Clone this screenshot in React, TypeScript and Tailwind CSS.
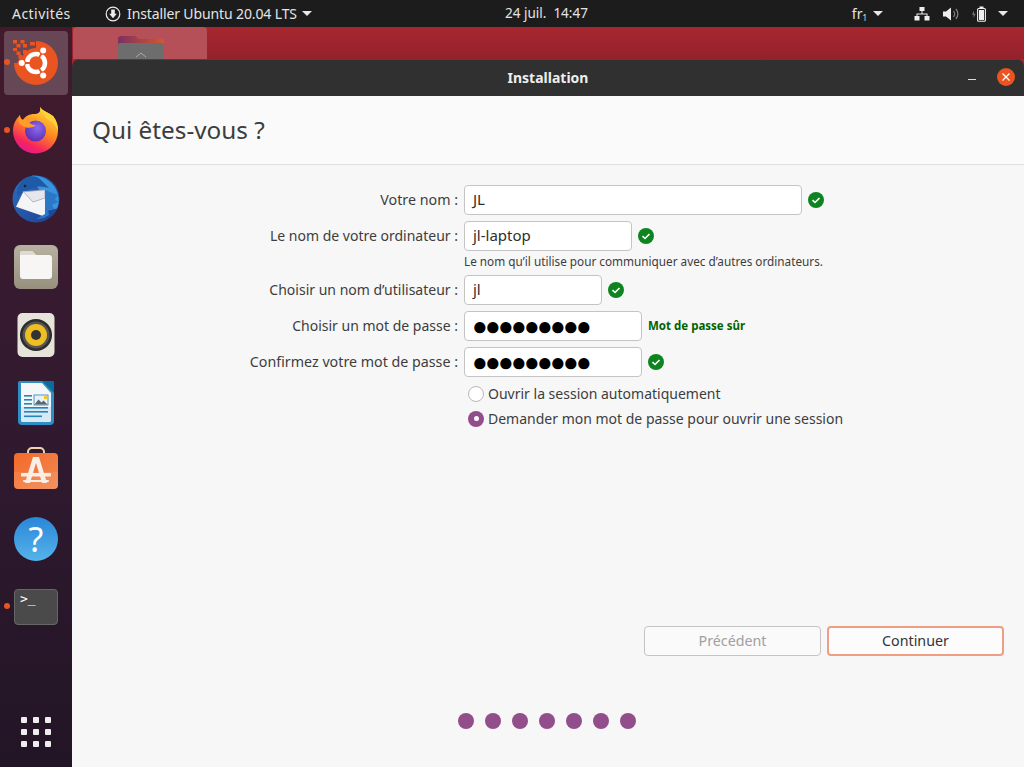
const UI_FONT = "font-['Noto_Sans','Open_Sans',sans-serif]";

function Caret({ className = "" }: { className?: string }) {
  return <div className={`h-0 w-0 border-x-[5px] border-t-[5px] border-x-transparent border-t-[#e8e8e8] ${className}`} />;
}

function TopBar() {
  return (
    <div className="flex h-[27px] items-center bg-[#1c1c1c] text-[14px] text-[#e4e4e4]">
      <span className="ml-3 w-[93px] tracking-[0.45px]">Activités</span>
      <svg width="16" height="16" viewBox="0 0 16 16" className="mr-[6px]">
        <circle cx="8" cy="8" r="6.8" fill="none" stroke="#eee" strokeWidth="1.2" />
        <path d="M6.2 3.5h3.6v4.2h2L8 12.2 4.2 7.7h2z" fill="#eee" />
      </svg>
      <span className="tracking-[-0.12px]">Installer Ubuntu 20.04 LTS</span>
      <Caret className="ml-[5px]" />
      <div className="absolute left-[505px] top-0 flex h-[27px] items-center text-[13.5px]">24 juil.&nbsp;&nbsp;14:47</div>
      <div className="ml-auto flex items-center">
        <span className="text-[14px]">fr<sub className="text-[8px]">1</sub></span>
        <Caret className="ml-[6px] mr-[31px]" />
        <svg width="16" height="14" viewBox="0 0 16 14" className="mr-[13px]" fill="#eee">
          <rect x="5.5" y="0" width="5" height="4" />
          <rect x="0.5" y="9" width="5" height="4.5" />
          <rect x="10.5" y="9" width="5" height="4.5" />
          <path d="M7.5 4h1v2.5h5V9h-1V7.5h-9V9h-1V6.5h5z" />
        </svg>
        <svg width="16" height="14" viewBox="0 0 16 14" className="mr-[12px]">
          <path d="M0 4.5h3L8 .5v13l-5-4H0z" fill="#eee" />
          <path d="M10.5 4.2a4 4 0 0 1 0 5.6M12.8 2a7.2 7.2 0 0 1 0 10" fill="none" stroke="#888" strokeWidth="1.2" />
        </svg>
        <svg width="16" height="16" viewBox="0 0 16 16" className="mr-[11px]">
          <path d="M3 4.5v3.2h1.6L2.6 12V8.8H1z" fill="#777" />
          <rect x="6.6" y="2.5" width="7.8" height="12.8" rx="1" fill="none" stroke="#eee" strokeWidth="1.1" />
          <rect x="8.5" y="0.5" width="4" height="2" fill="#eee" />
          <rect x="8" y="4" width="5" height="10" fill="#eee" />
        </svg>
        <Caret className="mr-4" />
      </div>
    </div>
  );
}

function UbuntuIcon() {
  return (
    <svg width="48" height="48" viewBox="0 0 48 48">
      <path d="M24 2A22 22 0 1 1 2 24L12 24A12 12 0 0 1 24 12z" fill="#e95420" />
      <circle cx="24" cy="24" r="15" fill="#e95420" />
      <g fill="#e95420">
        <rect x="1" y="1" width="4" height="3.500" />
        <rect x="8.500" y="1" width="4" height="3.500" />
        <rect x="18" y="3" width="5" height="3.500" />
        <rect x="4.500" y="5" width="4" height="3.500" />
        <rect x="11" y="5" width="4" height="3.500" />
        <rect x="1" y="9" width="4" height="3" />
        <rect x="11" y="11" width="4" height="4" />
        <rect x="4.500" y="12.500" width="4" height="3.500" />
        <rect x="6.500" y="16" width="4" height="4" />
      </g>
      <circle cx="24" cy="24" r="9" fill="none" stroke="#fff" strokeWidth="4.500" />
      <g stroke="#e95420" strokeWidth="1.800">
        <path d="M18 24L10 24M27 18.800L31 11.900M27 29.200L31 36.100" />
      </g>
      <circle cx="9.700" cy="24" r="4.200" fill="#e95420" />
      <circle cx="31.200" cy="11.500" r="4.200" fill="#e95420" />
      <circle cx="31.200" cy="36.500" r="4.200" fill="#e95420" />
      <circle cx="9.700" cy="24" r="3" fill="#fff" />
      <circle cx="31.200" cy="11.500" r="3" fill="#fff" />
      <circle cx="31.200" cy="36.500" r="3" fill="#fff" />
    </svg>
  );
}

function FirefoxIcon() {
  return (
    <svg width="48" height="48" viewBox="0 0 48 48" className="-mt-px">
      <defs>
        <linearGradient id="ffA" x1="0.750" y1="0" x2="0.250" y2="1">
          <stop offset="0" stopColor="#ffe040" />
          <stop offset="0.450" stopColor="#ff8a1f" />
          <stop offset="0.800" stopColor="#f5245f" />
          <stop offset="1" stopColor="#e4179a" />
        </linearGradient>
        <radialGradient id="ffB" cx="0.600" cy="0.350" r="0.700">
          <stop offset="0" stopColor="#8a6cf0" />
          <stop offset="1" stopColor="#5b2bb0" />
        </radialGradient>
      </defs>
      <path d="M28 0C30 4 36 5 41 9C45 14 46 19 46 24A22.500 22.500 0 0 1 1 24C1 18 3 13 8 8C8 11 9 12 11 13C13 9 18 7 22 7C26 7 29 6 28 0z" fill="url(#ffA)" />
      <path d="M28 0C30 4 36 5 41 9C45 14 46 19 46 24C44 18 40 14 35 12C33 8 29 5 28 0z" fill="#ffd23a" />
      <circle cx="23.500" cy="24" r="10.500" fill="url(#ffB)" />
      <path d="M8 8C8 11 9 12 11 13C14 10 20 9 26 12C24 13 20 14 17 15C19 18 23 18 24 18C21 21 15 22 11 19C7 17 5 14 8 8z" fill="#ff9c2a" />
    </svg>
  );
}

function ThunderbirdIcon() {
  return (
    <svg width="48" height="48" viewBox="0 0 48 48">
      <defs>
        <linearGradient id="tbA" x1="0" y1="0" x2="1" y2="1">
          <stop offset="0" stopColor="#2f6fc0" />
          <stop offset="1" stopColor="#1c3f8f" />
        </linearGradient>
      </defs>
      <circle cx="24" cy="24" r="23.500" fill="url(#tbA)" />
      <path d="M20 0.500c9 0 18 4 23 12 4 7 5 14 2 21l-9 2-4-10z" fill="#3a94dc" />
      <path d="M14 3c5-3 11-2 14 1l9 9c-6-2-12-2-17 0L5 21C4 13 9 6 14 3z" fill="#1e5aa8" />
      <path d="M11.300 16.700L33 23V41.700L4 31.700z" fill="#f5f5f8" />
      <path d="M11.300 16.700L33 15 33 23 21 27z" fill="#e6e6ee" stroke="#a7a7b5" strokeWidth="0.800" />
      <path d="M33 15l13 5-3 4 3 3-6 3 2 4-6 1 1 5-5 3-8 1 9-5z" fill="#2c78c8" />
      <circle cx="13" cy="11" r="1.300" fill="#222" />
    </svg>
  );
}

function FilesIcon() {
  return (
    <svg width="48" height="48" viewBox="0 0 48 48">
      <defs>
        <linearGradient id="fiA" x1="0" y1="0" x2="0" y2="1">
          <stop offset="0" stopColor="#b8b1a1" />
          <stop offset="1" stopColor="#96907d" />
        </linearGradient>
      </defs>
      <rect x="2" y="2" width="44" height="44" rx="6" fill="url(#fiA)" />
      <path d="M8 11a3 3 0 0 1 3-3h9l4 4h13a3 3 0 0 1 3 3v18a3 3 0 0 1-3 3H11a3 3 0 0 1-3-3z" fill="#f7f6f4" />
      <path d="M8 11a3 3 0 0 1 3-3h9l4 4H8z" fill="#dedbd4" />
    </svg>
  );
}

function RhythmboxIcon() {
  return (
    <svg width="48" height="48" viewBox="0 0 48 48">
      <rect x="5.500" y="2" width="37" height="44" rx="5" fill="#e6e3da" />
      <circle cx="24" cy="24" r="16" fill="#2c2c2c" />
      <circle cx="24" cy="24" r="13.500" fill="#555" />
      <circle cx="24" cy="24" r="11" fill="#efbe22" />
      <circle cx="24" cy="24" r="5" fill="#333" />
    </svg>
  );
}

function WriterIcon() {
  return (
    <svg width="48" height="48" viewBox="0 0 48 48">
      <path d="M6 4a2 2 0 0 1 2-2h32a2 2 0 0 1 2 2v38a4 4 0 0 1-4 4H10a4 4 0 0 1-4-4z" fill="#2f8fc5" />
      <path d="M30 2h10a2 2 0 0 1 2 2v10z" fill="#0d6a9c" />
      <path d="M9 4h21l9 10v27a2 2 0 0 1-2 2H11a2 2 0 0 1-2-2z" fill="#f4f6f8" />
      <path d="M9 28h30v13a2 2 0 0 1-2 2H11a2 2 0 0 1-2-2z" fill="#d8e9f4" />
      <g fill="#1f86c0">
        <rect x="12" y="16" width="8" height="1.600" />
        <rect x="12" y="20" width="8" height="1.600" />
        <rect x="12" y="24" width="8" height="1.600" />
        <rect x="12" y="28" width="24" height="1.600" />
        <rect x="12" y="32" width="24" height="1.600" />
        <rect x="12" y="36.500" width="18" height="1.600" />
      </g>
      <rect x="22" y="16" width="14" height="10" fill="#e9f1f6" stroke="#1f86c0" strokeWidth="0.800" />
      <path d="M22.500 25.500l4-5 3 3 2-2 4 4z" fill="#5a6670" />
      <rect x="32" y="16.500" width="3.500" height="3.500" fill="#f3c530" />
    </svg>
  );
}

function SoftwareIcon() {
  return (
    <svg width="48" height="48" viewBox="0 0 48 48">
      <defs>
        <linearGradient id="swA" x1="0" y1="0" x2="1" y2="1">
          <stop offset="0" stopColor="#f4692a" />
          <stop offset="1" stopColor="#f08a54" />
        </linearGradient>
      </defs>
      <path d="M16 8V5a4 4 0 0 1 4-4h8a4 4 0 0 1 4 4v3" fill="none" stroke="#f2d3ae" strokeWidth="2" />
      <rect x="2" y="6" width="44" height="36" rx="4" fill="url(#swA)" />
      <path d="M2 25h44v13a4 4 0 0 1-4 4H6a4 4 0 0 1-4-4z" fill="#fff" opacity="0.080" />
      <path d="M21 10h6l8 26h-5l-6-20-6 20h-5z" fill="#fbeee6" />
      <rect x="9" y="26" width="30" height="3.500" rx="1" fill="#fbeee6" />
      <rect x="11" y="33" width="26" height="2" rx="1" fill="#fbeee6" />
    </svg>
  );
}

function HelpIcon() {
  return (
    <div className="flex h-[44px] w-[44px] items-center justify-center rounded-full bg-gradient-to-b from-[#2a86d8] to-[#55b4ea]">
      <span className="text-[34px] leading-[44px] text-white">?</span>
    </div>
  );
}

function TerminalIcon() {
  return (
    <div className="h-[36px] w-[44px] rounded-[4px] border border-[#666] bg-[#4a4a4a] pl-[5px] pt-[1px] font-['DejaVu_Sans_Mono',monospace] text-[13px] leading-[15px] text-white">
      &gt;_
    </div>
  );
}

function DockItem({ children, running, active }: { children: React.ReactNode; running?: boolean; active?: boolean }) {
  return (
    <div className="relative flex h-[68px] w-[72px] shrink-0 items-center justify-center">
      {active && <div className="absolute left-1 top-[2px] h-[64px] w-[64px] rounded-[4px] bg-white/20" />}
      {running && <div className="absolute left-[4px] top-[30px] h-[6px] w-[6px] rounded-full bg-[#e95420]" />}
      <div className="relative flex">{children}</div>
    </div>
  );
}

function Dock() {
  return (
    <div className="flex h-full w-[72px] shrink-0 flex-col bg-gradient-to-b from-[#421a2c] via-[#321a30] to-[#221526] pt-[2px]">
      <DockItem running active><UbuntuIcon /></DockItem>
      <DockItem running><FirefoxIcon /></DockItem>
      <DockItem><ThunderbirdIcon /></DockItem>
      <DockItem><FilesIcon /></DockItem>
      <DockItem><RhythmboxIcon /></DockItem>
      <DockItem><WriterIcon /></DockItem>
      <DockItem><SoftwareIcon /></DockItem>
      <DockItem><HelpIcon /></DockItem>
      <DockItem running><TerminalIcon /></DockItem>
      <div className="mt-auto mb-[20px] ml-[21px] grid w-[30px] grid-cols-3 gap-[6px]">
        {Array.from({ length: 9 }).map((_, i) => (
          <div key={i} className="h-[6px] w-[6px] rounded-[1px] bg-[#eeeeee]" />
        ))}
      </div>
    </div>
  );
}

function Check() {
  return (
    <svg width="16" height="16" viewBox="0 0 16 16" className="ml-[6px]">
      <circle cx="8" cy="8" r="8" fill="#0e8420" />
      <path d="M4.500 8.200l2.500 2.300 4.500-4.500" fill="none" stroke="#fff" strokeWidth="1.600" />
    </svg>
  );
}

function Field({ width, children }: { width: string; children: React.ReactNode }) {
  return (
    <div className={`flex h-[30px] items-center rounded-[4px] border border-[#c4c4c4] bg-white pb-px pl-2 text-[15px] text-[#2e2e2e] ${width}`}>
      {children}
    </div>
  );
}

function Secret() {
  return <span className="-ml-px font-['Liberation_Sans',sans-serif] text-[26px] leading-none tracking-[-2.7px] text-black">●●●●●●●●●</span>;
}

function Label({ children, size = "text-[14px]" }: { children: React.ReactNode; size?: string }) {
  return <div className={`flex h-[30px] items-center justify-end pb-px text-[#3d3d3d] ${size}`}>{children}</div>;
}

function Form() {
  return (
    <div className="grid grid-cols-[386px_1fr] gap-x-[6px] gap-y-[6px] pt-[20px]">
      <Label size="text-[14.25px]">Votre nom :</Label>
      <div className="flex items-center">
        <Field width="w-[338px]">JL</Field>
        <Check />
      </div>
      <Label>Le nom de votre ordinateur :</Label>
      <div className="flex items-center">
        <Field width="w-[168px]">jl-laptop</Field>
        <Check />
      </div>
      <div />
      <div className="-mt-[2px] h-[14px] text-[11.75px] leading-[12px] text-[#3d3d3d]">
        Le nom qu’il utilise pour communiquer avec d’autres ordinateurs.
      </div>
      <Label>Choisir un nom d’utilisateur :</Label>
      <div className="flex items-center">
        <Field width="w-[138px]">jl</Field>
        <Check />
      </div>
      <Label>Choisir un mot de passe :</Label>
      <div className="flex items-center">
        <Field width="w-[178px]"><Secret /></Field>
        <span className="ml-[6px] text-[11.5px] font-bold text-[#006400]">Mot de passe sûr</span>
      </div>
      <Label size="text-[14.25px]">Confirmez votre mot de passe :</Label>
      <div className="flex items-center">
        <Field width="w-[178px]"><Secret /></Field>
        <Check />
      </div>
      <div />
      <div className="-mt-[2px] flex flex-col pl-1 text-[14px] text-[#3d3d3d]">
        <div className="flex h-[25px] items-center gap-[4px]">
          <div className="h-4 w-4 rounded-full border border-[#b8b8b8] bg-white" />
          Ouvrir la session automatiquement
        </div>
        <div className="flex h-[25px] items-center gap-[4px]">
          <div className="flex h-4 w-4 items-center justify-center rounded-full bg-[#924d8b]">
            <div className="h-[5px] w-[5px] rounded-full bg-white" />
          </div>
          Demander mon mot de passe pour ouvrir une session
        </div>
      </div>
    </div>
  );
}

function InstallerWindow() {
  return (
    <div className="flex min-h-0 flex-1 flex-col overflow-hidden rounded-t-[8px]">
      <div className="relative flex h-[37px] shrink-0 items-center justify-center border-t border-[#444] bg-[#303030] pb-[2px] text-[14px] font-bold text-[#eeeeee]">
        Installation
        <div className="absolute right-[48px] top-[19px] h-px w-2 bg-[#ddd]" />
        <div className="absolute right-[9px] top-[8px] flex h-[18px] w-[18px] items-center justify-center rounded-full bg-[#e95420]">
          <svg width="10" height="10" viewBox="0 0 10 10">
            <path d="M1.500 1.500l7 7M8.500 1.500l-7 7" stroke="#fff" strokeWidth="1.300" />
          </svg>
        </div>
      </div>
      <div className="flex h-[69px] shrink-0 items-center border-b border-[#dfdfdf] bg-[#fafafa] pl-[20px] text-[24.3px] text-[#3d3d3d]">
        Qui êtes-vous ?
      </div>
      <div className="flex flex-1 flex-col bg-[#f7f7f7]">
        <Form />
        <div className="mt-auto flex justify-end gap-[6px] pr-[20px] text-[14.25px]">
          <div className="flex h-[30px] w-[177px] items-center justify-center rounded-[4px] border border-[#c4c4c4] bg-[#fafafa] pb-px text-[#a0a0a0]">
            Précédent
          </div>
          <div className="flex h-[30px] w-[177px] items-center justify-center rounded-[4px] border-2 border-[#ee9e82] bg-[#fcfcfc] pb-px text-[#333]">
            Continuer
          </div>
        </div>
        <div className="mt-[57px] mb-[38px] flex justify-center gap-[11px] pr-[2px]">
          {Array.from({ length: 7 }).map((_, i) => (
            <div key={i} className="h-4 w-4 rounded-full bg-[#924d8b]" />
          ))}
        </div>
      </div>
    </div>
  );
}

export default function App() {
  return (
    <div className={`relative flex h-[767px] w-[1024px] flex-col overflow-hidden ${UI_FONT}`}>
      <TopBar />
      <div className="flex min-h-0 flex-1">
        <Dock />
        <div className="flex min-w-0 flex-1 flex-col bg-[#a5262e]">
          <div className="flex h-[32px] shrink-0 bg-gradient-to-b from-[#a8262f] to-[#93222c]">
            <div className="ml-px flex h-full w-[134px] justify-center overflow-hidden rounded-t-[4px] bg-[#b65058]">
              <svg width="46" height="32" viewBox="0 0 46 32" className="ml-[2px] mt-[9px]">
                <defs>
                  <linearGradient id="tab" x1="0" y1="0" x2="1" y2="0">
                    <stop offset="0" stopColor="#7d2f63" />
                    <stop offset="1" stopColor="#d2592c" />
                  </linearGradient>
                </defs>
                <path d="M0 3a3 3 0 0 1 3-3h14l4 3h22a3 3 0 0 1 3 3v26H0z" fill="url(#tab)" />
                <path d="M0 9a2 2 0 0 1 2-2h42a2 2 0 0 1 2 2v23H0z" fill="#6d6d6d" />
                <path d="M18 21l5-4 5 4" fill="none" stroke="#aaa" strokeWidth="1" />
              </svg>
            </div>
          </div>
          <InstallerWindow />
        </div>
      </div>
    </div>
  );
}
